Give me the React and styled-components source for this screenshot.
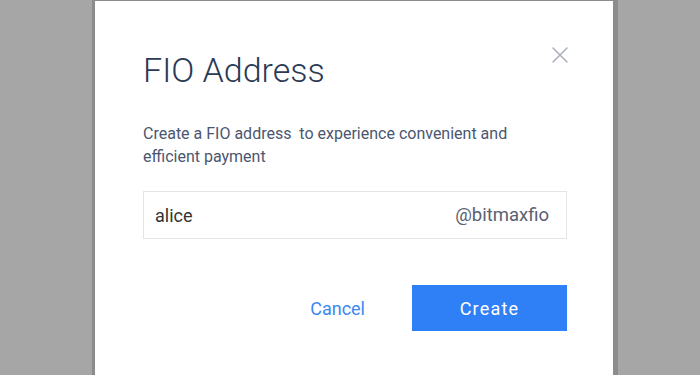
import React, { useState } from "react";
import styled, { createGlobalStyle } from "styled-components";

const GlobalStyle = createGlobalStyle`
  html, body {
    margin: 0;
    padding: 0;
    background: #a6a6a6;
    overflow: hidden;
  }
  * {
    box-sizing: border-box;
  }
`;

const Backdrop = styled.div`
  width: 700px;
  height: 375px;
  background-color: #a6a6a6;
  display: flex;
  flex-direction: row;
  align-items: flex-start;
  font-family: Roboto, "Noto Sans", sans-serif;
`;

const Modal = styled.div`
  margin-left: 92px;
  width: 526px;
  height: 380px;
  background-color: #ffffff;
  border-top: 1px solid #8c8c8c;
  border-left: 3px solid #8c8c8c;
  border-right: 5px solid #8c8c8c;
  padding: 49px 46px 0 48px;
  display: flex;
  flex-direction: column;
`;

const Header = styled.div`
  display: flex;
  flex-direction: row;
  justify-content: space-between;
  align-items: flex-start;
`;

const Title = styled.h1`
  margin: 0;
  font-size: 34px;
  line-height: 40px;
  font-weight: 300;
  color: #2b3a55;
`;

const CloseButton = styled.button`
  margin: -7px -5px 0 0;
  padding: 4px;
  width: 24px;
  height: 24px;
  border: none;
  background: none;
  cursor: pointer;
  display: flex;
  align-items: center;
  justify-content: center;
`;

const Description = styled.p`
  margin: 32px 0 0;
  font-size: 16px;
  line-height: 23px;
  color: #4b5670;
`;

const AddressField = styled.label`
  margin-top: 23px;
  height: 48px;
  border: 1px solid #e3e4e6;
  display: flex;
  flex-direction: row;
  align-items: center;
  padding: 0 17px 0 11px;
`;

const AddressInput = styled.input`
  flex: 1 1 auto;
  min-width: 0;
  border: none;
  outline: none;
  padding: 0;
  font-family: inherit;
  font-size: 18px;
  color: #333333;
  background: transparent;
`;

const Suffix = styled.span`
  flex: 0 0 auto;
  font-size: 18.5px;
  color: #5a6170;
`;

const Actions = styled.div`
  margin-top: 46px;
  display: flex;
  flex-direction: row;
  justify-content: flex-end;
  align-items: center;
  gap: 47px;
`;

const TextButton = styled.button`
  border: none;
  background: none;
  padding: 0;
  font-family: inherit;
  font-size: 18px;
  color: #3a88f4;
  cursor: pointer;
`;

const PrimaryButton = styled.button`
  width: 155px;
  height: 46px;
  border: none;
  background-color: #2f7ff7;
  color: #ffffff;
  font-family: inherit;
  font-size: 18px;
  letter-spacing: 1.2px;
  cursor: pointer;
`;

function CloseIcon() {
  return (
    <svg width="16" height="16" viewBox="0 0 16 16">
      <path
        d="M1 1 L15 15 M15 1 L1 15"
        stroke="#a9afb8"
        strokeWidth="1.5"
        strokeLinecap="round"
      />
    </svg>
  );
}

export default function App() {
  const [name, setName] = useState("alice");

  return (
    <>
      <GlobalStyle />
      <Backdrop>
        <Modal>
          <Header>
            <Title>FIO Address</Title>
            <CloseButton aria-label="Close">
              <CloseIcon />
            </CloseButton>
          </Header>
          <Description>
            {"Create a FIO address\u00a0 to experience convenient and efficient payment"}
          </Description>
          <AddressField>
            <AddressInput value={name} onChange={(e) => setName(e.target.value)} />
            <Suffix>@bitmaxfio</Suffix>
          </AddressField>
          <Actions>
            <TextButton>Cancel</TextButton>
            <PrimaryButton>Create</PrimaryButton>
          </Actions>
        </Modal>
      </Backdrop>
    </>
  );
}
